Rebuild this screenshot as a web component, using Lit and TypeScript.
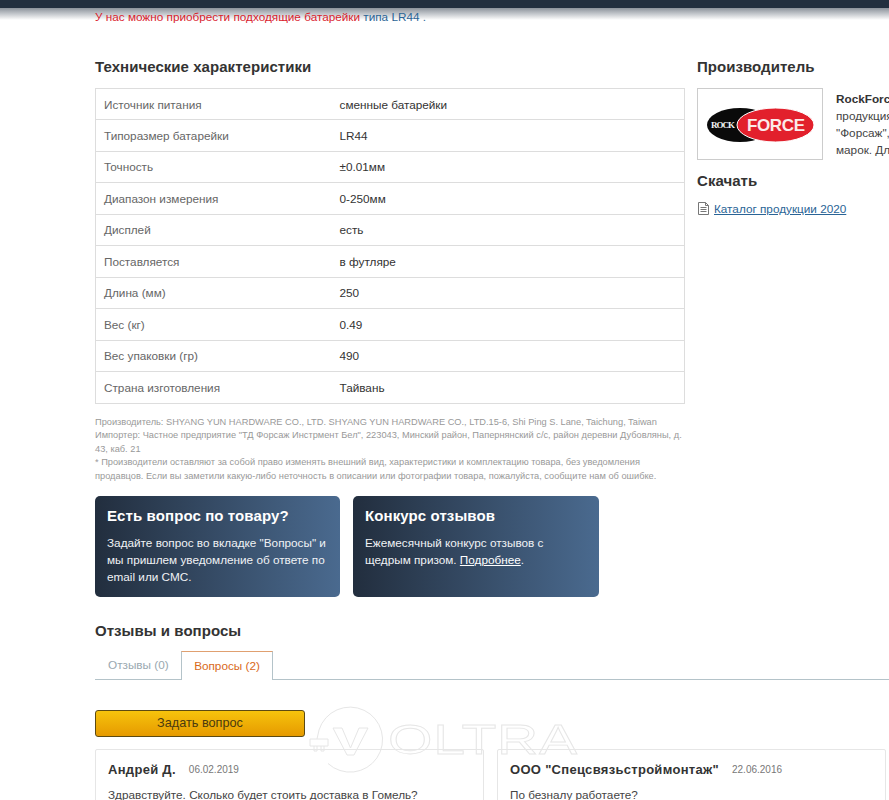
import { LitElement, html, css } from "lit";
import { customElement } from "lit/decorators.js";

const specs: [string, string][] = [
  ["Источник питания", "сменные батарейки"],
  ["Типоразмер батарейки", "LR44"],
  ["Точность", "±0.01мм"],
  ["Диапазон измерения", "0-250мм"],
  ["Дисплей", "есть"],
  ["Поставляется", "в футляре"],
  ["Длина (мм)", "250"],
  ["Вес (кг)", "0.49"],
  ["Вес упаковки (гр)", "490"],
  ["Страна изготовления", "Тайвань"],
];

@customElement("app-root")
export class AppRoot extends LitElement {
  static styles = css`
    :host { display: block; width: 889px; height: 800px; overflow: hidden; position: relative; background: #fff; font-family: "Liberation Sans", Arial, sans-serif; font-size: 11.75px; color: #333; }
    .topbar { height: 8px; background: #222f3f; }
    .fade { height: 12px; background: linear-gradient(#8b929b, #fff); margin-bottom: -12px; }
    .page { padding-left: 95px; display: flex; flex-direction: column; width: 1000px; box-sizing: border-box; }
    .notice { line-height: 17px; color: #d9232e; height: 17px; }
    .notice a { color: #2a6496; text-decoration: none; }
    .notice .dot { color: #2a6496; }
    .cols { display: flex; gap: 12px; margin-top: 32px; }
    .left { width: 590px; flex: none; }
    .right { width: 300px; flex: none; }
    h2 { margin: 0; font-size: 15px; line-height: 20px; font-weight: bold; color: #333; letter-spacing: 0.05px; }
    .specs { margin-top: 11px; border: 1px solid #ddd; border-bottom: 0; box-sizing: border-box; }
    .row { display: grid; grid-template-columns: 235.5px 1fr; height: 31.5px; align-items: center; border-bottom: 1px solid #ddd; box-sizing: border-box; padding-left: 8px; }
    .row:first-child { height: 31px; }
    .row .k { color: #666; }
    .row .v { color: #333; }
    .legal { margin-top: 12px; font-size: 9.25px; line-height: 13.5px; color: #999; width: 590px; }
    .promos { display: flex; gap: 13px; margin-top: 13px; }
    .promo { height: 101px; border-radius: 5px; background: linear-gradient(90deg, #222e3e, #4a6a8f); color: #fff; padding: 10px 12px; box-sizing: border-box; }
    .promo.a { width: 245px; }
    .promo.b { width: 246px; }
    .promo h3 { margin: 0 0 8px; font-size: 15px; line-height: 20px; font-weight: bold; letter-spacing: 0.1px; }
    .promo p { margin: 0; line-height: 17px; color: #f0f2f5; }
    .promo a { color: #fff; text-decoration: underline; }
    .maker { display: flex; gap: 13px; margin-top: 11px; align-items: flex-start; }
    .logo { width: 126px; height: 72px; border: 1px solid #ccc; box-sizing: border-box; flex: none; display: block; }
    .maker-text { line-height: 17px; color: #444; width: 160px; white-space: nowrap; margin-top: 2px; }
    .maker-text b { color: #333; }
    .dl-title { margin-top: 11px; }
    .dl { display: flex; align-items: center; gap: 4px; margin-top: 9px; line-height: 17px; }
    .dl a { color: #2a6496; text-decoration: underline; }
    .reviews-title { margin-top: 24px; }
    .tabs { display: flex; margin-top: 10px; height: 28px; border-bottom: 1px solid #b4c3c9; width: 794px; }
    .tab { width: 86px; height: 28px; line-height: 28px; padding-left: 13px; box-sizing: border-box; color: #9aa8b0; white-space: nowrap; }
    .tab.on { width: 92px; padding: 0; border: 1px solid #b4c3c9; border-top-color: #e0a070; border-bottom: 0; background: #fff; color: #d9691a; height: 29px; text-align: center; }
    .ask { margin-top: 30px; width: 210px; height: 27px; border: 1px solid #5c4a12; border-radius: 3px; background: linear-gradient(#f6c30c, #e69a00); color: #4a3a10; text-align: center; line-height: 25px; box-sizing: border-box; font-size: 12.7px; }
    .qs { display: flex; gap: 13px; margin-top: 12px; }
    .q { width: 389px; height: 120px; border: 1px solid #e6e6e6; box-sizing: border-box; padding: 11px 12px; flex: none; border-radius: 2px; }
    .q .head { display: flex; align-items: center; gap: 13px; height: 16px; }
    .q .name { font-size: 13px; font-weight: bold; color: #333; letter-spacing: 0.3px; }
    .q .date { font-size: 10px; color: #777; }
    .q p { margin: 9px 0 0; line-height: 17px; color: #444; }
    .watermark { position: absolute; left: 308px; top: 700px; width: 290px; height: 80px; pointer-events: none; }
    .watermark svg { display: block; }
    .watermark span { position: absolute; left: 80px; top: 14px; font-size: 43px; line-height: 50px; letter-spacing: 0.5px; color: transparent; -webkit-text-stroke: 0.8px #e6e6e6; transform: scaleX(1.33); transform-origin: left center; white-space: nowrap; }
  `;

  private icon() {
    return html`<svg width="13" height="15" viewBox="0 0 13 15" fill="none" stroke="#777" stroke-width="1">
      <path d="M1.5 1.5H8.5L11.5 4.5V13.5H1.5Z M8.5 1.5V4.5H11.5 M3.5 6.5H9.5 M3.5 8.5H9.5 M3.5 10.5H9.5"/></svg>`;
  }

  private logo() {
    return html`<svg class="logo" viewBox="0 0 124 70">
      <ellipse cx="42" cy="36" rx="33" ry="17" fill="#0a0a0a"/>
      <ellipse cx="77.5" cy="36" rx="38.5" ry="17" fill="#e2202c" stroke="#fff" stroke-width="1"/>
      <text x="13" y="39" font-family="Liberation Serif, serif" font-size="9" font-weight="bold" fill="#f4f4f4" textLength="24">ROCK</text>
      <text x="49" y="42" font-family="Liberation Sans, sans-serif" font-size="17" font-weight="bold" fill="#fbeaea" textLength="58">FORCE</text>
    </svg>`;
  }

  render() {
    return html`
      <div class="topbar"></div>
      <div class="fade"></div>
      <div class="page">
        <div class="notice">У нас можно приобрести подходящие батарейки <a>типа LR44</a> <span class="dot">.</span></div>
        <div class="cols">
          <div class="left">
            <h2>Технические характеристики</h2>
            <div class="specs">
              ${specs.map(([k, v]) => html`<div class="row"><span class="k">${k}</span><span class="v">${v}</span></div>`)}
            </div>
            <div class="legal">
              Производитель: SHYANG YUN HARDWARE CO., LTD. SHYANG YUN HARDWARE CO., LTD.15-6, Shi Ping S. Lane, Taichung, Taiwan<br />
              Импортер: Частное предприятие "ТД Форсаж Инстрмент Бел", 223043, Минский район, Папернянский с/с, район деревни Дубовляны, д. 43, каб. 21<br />
              * Производители оставляют за собой право изменять внешний вид, характеристики и комплектацию товара, без уведомления продавцов. Если вы заметили какую-либо неточность в описании или фотографии товара, пожалуйста, сообщите нам об ошибке.
            </div>
            <div class="promos">
              <div class="promo a">
                <h3>Есть вопрос по товару?</h3>
                <p>Задайте вопрос во вкладке "Вопросы" и мы пришлем уведомление об ответе по email или СМС.</p>
              </div>
              <div class="promo b">
                <h3>Конкурс отзывов</h3>
                <p>Ежемесячный конкурс отзывов с щедрым призом. <a>Подробнее</a>.</p>
              </div>
            </div>
          </div>
          <div class="right">
            <h2>Производитель</h2>
            <div class="maker">
              ${this.logo()}
              <div class="maker-text"><b>RockForce</b> — это<br />продукция компании<br />"Форсаж", одной из<br />марок. Для профессионалов</div>
            </div>
            <h2 class="dl-title">Скачать</h2>
            <div class="dl">${this.icon()}<a>Каталог продукции 2020</a></div>
          </div>
        </div>
        <h2 class="reviews-title">Отзывы и вопросы</h2>
        <div class="tabs">
          <div class="tab">Отзывы (0)</div>
          <div class="tab on">Вопросы (2)</div>
        </div>
        <div class="ask">Задать вопрос</div>
        <div class="qs">
          <div class="q">
            <div class="head"><span class="name">Андрей Д.</span><span class="date">06.02.2019</span></div>
            <p>Здравствуйте. Сколько будет стоить доставка в Гомель?</p>
          </div>
          <div class="q">
            <div class="head"><span class="name">ООО "Спецсвязьстроймонтаж"</span><span class="date">22.06.2016</span></div>
            <p>По безналу работаете?</p>
          </div>
        </div>
      </div>
      <div class="watermark">
        <svg width="76" height="80" viewBox="0 0 76 80" fill="none" stroke="#e6e6e6" stroke-width="1">
          <path d="M11 30A32.5 32.5 0 1 1 20 63.5"/>
          <path d="M25 28H34L42.5 48L51 28H60L46 55H39Z"/>
          <path d="M11 30L9 39M2 39H20V46H2Z M6 46V51H9V46 M13 46V51H16V46"/>
        </svg>
        <span>OLTRA</span>
      </div>
    `;
  }
}
